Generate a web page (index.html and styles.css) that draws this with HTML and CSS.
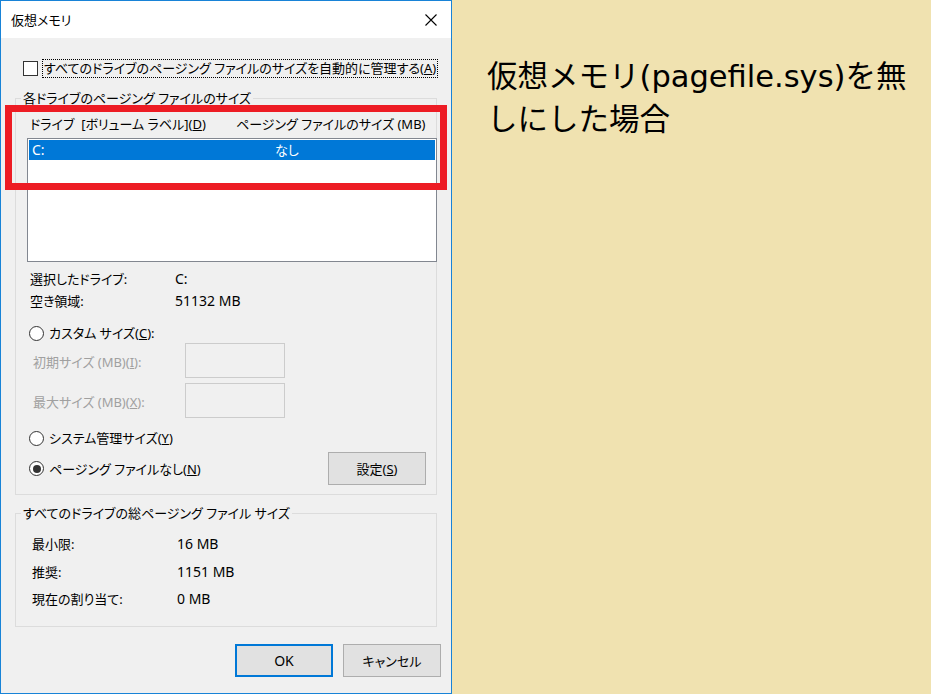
FILE: index.html
```html
<!DOCTYPE html>
<html lang="ja">
<head>
<meta charset="utf-8">
<title>仮想メモリ</title>
<link rel="stylesheet" href="styles.css">
</head>
<body>
<div class="page">
  <div class="dialog">
    <div class="titlebar">
      <span class="title">仮想メモリ</span>
      <svg class="close" width="12" height="12" viewBox="0 0 12 12"><path d="M0.5 0.5 L11.5 11.5 M11.5 0.5 L0.5 11.5" stroke="#000" stroke-width="1.1" fill="none"/></svg>
    </div>
    <div class="body">
      <div class="auto-row">
        <span class="checkbox"></span>
        <span class="focus-label">すべてのドライブのページング ファイルのサイズを自動的に管理する(<u>A</u>)</span>
      </div>

      <div class="group group1">
        <div class="group-title">各ドライブのページング ファイルのサイズ</div>
        <div class="header-row">
          <span class="col1">ドライブ&nbsp;&nbsp;[ボリューム ラベル](<u>D</u>)</span>
          <span class="col2">ページング ファイルのサイズ (MB)</span>
        </div>
        <div class="listbox">
          <div class="list-row selected">
            <span class="drive num">C:</span>
            <span class="size">なし</span>
          </div>
        </div>
        <div class="info-row first">
          <span class="info-label">選択したドライブ:</span>
          <span class="info-value num">C:</span>
        </div>
        <div class="info-row">
          <span class="info-label">空き領域:</span>
          <span class="info-value num">51132 MB</span>
        </div>
        <div class="radio-row custom">
          <span class="radio"></span>
          <span class="radio-label">カスタム サイズ(<u>C</u>):</span>
        </div>
        <div class="input-row first-input">
          <span class="input-label disabled">初期サイズ (MB)(<u>I</u>):</span>
          <span class="textbox"></span>
        </div>
        <div class="input-row second-input">
          <span class="input-label disabled">最大サイズ (MB)(<u>X</u>):</span>
          <span class="textbox"></span>
        </div>
        <div class="radio-row system">
          <span class="radio"></span>
          <span class="radio-label">システム管理サイズ(<u>Y</u>)</span>
        </div>
        <div class="radio-row nopaging">
          <span class="radio checked"></span>
          <span class="radio-label">ページング ファイルなし(<u>N</u>)</span>
          <span class="button set-button">設定(<u>S</u>)</span>
        </div>
      </div>

      <div class="group group2">
        <div class="group-title">すべてのドライブの総ページング ファイル サイズ</div>
        <div class="total-row r1">
          <span class="total-label">最小限:</span>
          <span class="total-value num">16 MB</span>
        </div>
        <div class="total-row r2">
          <span class="total-label">推奨:</span>
          <span class="total-value num">1151 MB</span>
        </div>
        <div class="total-row r3">
          <span class="total-label">現在の割り当て:</span>
          <span class="total-value num">0 MB</span>
        </div>
      </div>

      <div class="button-row">
        <span class="button default num">OK</span>
        <span class="button">キャンセル</span>
      </div>
    </div>
    <div class="highlight"></div>
  </div>
  <div class="note">
    <p class="note-text">仮想メモリ(pagefile.sys)を無<br>しにした場合</p>
  </div>
</div>
</body>
</html>
```

FILE: styles.css
```css
* { box-sizing: border-box; }

html, body {
  margin: 0;
  padding: 0;
}

body {
  font-family: "Noto Sans", "Noto Sans CJK JP", sans-serif;
  font-feature-settings: "palt";
  font-size: 13px;
  line-height: 14px;
  color: #000;
  background: #f0e2b0;
}

.num { font-size: 14px; }

.page {
  display: flex;
  width: 931px;
  height: 694px;
}

.dialog {
  position: relative;
  width: 452px;
  height: 694px;
  border: 1px solid #1883d7;
  background: #f0f0f0;
  flex: none;
}

.titlebar {
  height: 37px;
  background: #fff;
  display: flex;
  align-items: center;
  padding-left: 10px;
  padding-right: 14px;
  justify-content: space-between;
}

.title {
  line-height: 14px;
  margin-top: 1px;
}

.close {
  display: block;
  margin-top: 1px;
}

u {
  text-decoration: underline;
  text-underline-offset: 1px;
}

/* auto checkbox row */
.auto-row {
  display: flex;
  align-items: center;
  height: 19px;
  margin: 21px 0 0 22px;
}

.checkbox {
  width: 15px;
  height: 15px;
  border: 1px solid #333;
  background: #fff;
  flex: none;
}

.focus-label {
  margin-left: 4px;
  border: 1px dotted #000;
  padding: 0 1px;
  line-height: 17px;
  height: 19px;
  white-space: nowrap;
}

/* group boxes */
.group {
  border: 1px solid #dcdcdc;
  margin-left: 14px;
  width: 422px;
}

.group1 {
  margin-top: 20px;
  padding-bottom: 9px;
}

.group2 {
  margin-top: 18px;
  padding-bottom: 20px;
}

.group-title {
  display: table;
  margin: -8px 0 0 5px;
  padding: 0 2px;
  background: #f0f0f0;
  line-height: 14px;
}

.header-row {
  display: flex;
  margin-top: 12px;
  padding-left: 14px;
  white-space: nowrap;
}

.col1 { width: 206px; flex: none; }

.listbox {
  margin-left: 11px;
  margin-top: 7px;
  width: 410px;
  height: 124px;
  border: 1px solid #828790;
  background: #fff;
  padding: 1px;
}

.list-row {
  display: flex;
  height: 20px;
  align-items: center;
  padding-left: 3px;
}

.list-row.selected {
  background: #0078d7;
  color: #fff;
}

.drive { width: 243px; flex: none; }

.info-row {
  display: flex;
  align-items: center;
  height: 14px;
  margin-top: 8px;
  padding-left: 14px;
}

.info-row.first { margin-top: 10px; }

.info-label { width: 145px; flex: none; }

.radio-row {
  display: flex;
  align-items: center;
  padding-left: 13px;
}

.radio-row.custom { margin-top: 18px; height: 14px; }
.radio-row.system { margin-top: 13px; height: 14px; }
.radio-row.nopaging { margin-top: 7px; height: 33px; padding-right: 10px; }

.radio {
  width: 15px;
  height: 15px;
  border: 1px solid #333;
  border-radius: 50%;
  background: #fff;
  flex: none;
  display: flex;
  align-items: center;
  justify-content: center;
}

.radio.checked::after {
  content: "";
  width: 8px;
  height: 8px;
  border-radius: 50%;
  background: #333;
}

.radio-label {
  margin-left: 5px;
  white-space: nowrap;
}

.input-row {
  display: flex;
  align-items: center;
  height: 35px;
  padding-left: 17px;
}

.input-row.first-input { margin-top: 3px; }
.input-row.second-input { margin-top: 5px; }

.input-label {
  width: 152px;
  flex: none;
  padding-top: 3px;
  white-space: nowrap;
}

.disabled { color: #a0a0a0; }

.textbox {
  width: 100px;
  height: 35px;
  border: 1px solid #cccccc;
  background: #f0f0f0;
}

.button {
  display: flex;
  align-items: center;
  justify-content: center;
  width: 98px;
  height: 33px;
  background: #e1e1e1;
  border: 1px solid #adadad;
  white-space: nowrap;
}

.set-button { margin-left: auto; }

.button.default {
  border: 2px solid #0078d7;
}

.total-row {
  display: flex;
  align-items: center;
  height: 14px;
  padding-left: 16px;
}

.total-row.r1 { margin-top: 17px; }
.total-row.r2 { margin-top: 14px; }
.total-row.r3 { margin-top: 13px; }

.total-label { width: 145px; flex: none; }

.button-row {
  display: flex;
  justify-content: flex-end;
  gap: 10px;
  margin-top: 17px;
  padding-right: 10px;
}

/* red annotation frame over the dialog */
.highlight {
  position: absolute;
  left: 4px;
  top: 104px;
  width: 442px;
  height: 85px;
  border: 7px solid #ed1c24;
  pointer-events: none;
}

/* right-hand note */
.note {
  flex: 1;
  padding: 55px 0 0 35px;
}

.note-text {
  margin: 0;
  font-family: "DejaVu Sans", "Noto Sans CJK JP", sans-serif;
  font-feature-settings: normal;
  font-size: 30.5px;
  line-height: 43px;
  color: #000;
  -webkit-font-smoothing: none;
  white-space: nowrap;
}
```
